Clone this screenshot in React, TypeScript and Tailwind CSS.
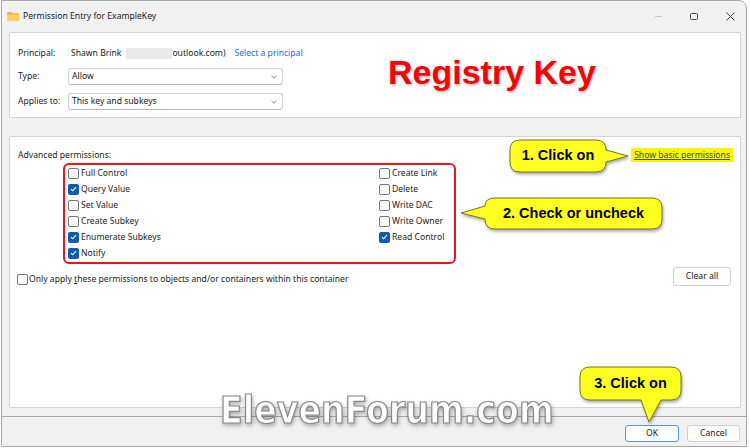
import React from "react";

type Perm = { label: string; on?: boolean };

const leftPerms: Perm[] = [
  { label: "Full Control" },
  { label: "Query Value", on: true },
  { label: "Set Value" },
  { label: "Create Subkey" },
  { label: "Enumerate Subkeys", on: true },
  { label: "Notify", on: true },
];

const rightPerms: Perm[] = [
  { label: "Create Link" },
  { label: "Delete" },
  { label: "Write DAC" },
  { label: "Write Owner" },
  { label: "Read Control", on: true },
];

function Check({ on }: { on?: boolean }) {
  if (on) {
    return (
      <span className="flex h-[11px] w-[11px] shrink-0 items-center justify-center rounded-[2px] bg-[#0f5cb8]">
        <svg width="7" height="6" viewBox="0 0 7 6">
          <path d="M1 3.1 2.7 4.8 6 1.2" fill="none" stroke="#fff" strokeWidth="1.1" />
        </svg>
      </span>
    );
  }
  return <span className="h-[11px] w-[11px] shrink-0 rounded-[2px] border border-[#777] bg-[#fbfbfb]" />;
}

function Select({ value }: { value: string }) {
  return (
    <div className="flex h-[17px] w-[215px] items-center justify-between rounded-[3px] border border-[#d2d2d2] border-b-[#b8b8b8] bg-white pl-[3px] pr-[5px]">
      <span>{value}</span>
      <svg width="6" height="4" viewBox="0 0 6 4">
        <path d="M0.5 0.8 3 3.2 5.5 0.8" fill="none" stroke="#666" strokeWidth="0.8" />
      </svg>
    </div>
  );
}

function PermRow({ p }: { p: Perm }) {
  return (
    <div className="flex h-[16px] items-center">
      <Check on={p.on} />
      <span className="ml-[2px]">{p.label}</span>
    </div>
  );
}

export default function App() {
  return (
    <div className="relative h-[448px] w-[750px] overflow-hidden bg-white font-['Noto_Sans',sans-serif] text-[8.6px] text-[#1b1b1b]">
      {/* window */}
      <div className="ml-[1px] flex h-[447px] w-[746px] flex-col rounded-tr-[8px] border border-[#a8a8a8] bg-[#f1f1f1]">
        {/* title bar */}
        <div className="flex h-[31px] shrink-0 items-center pl-[5px]">
          <svg width="12" height="9" viewBox="0 0 12 9" className="mb-[1px]">
            <path d="M0 1 Q0 0 1 0 H4.5 L5.5 1.2 H11 Q12 1.2 12 2.2 V8 Q12 9 11 9 H1 Q0 9 0 8 Z" fill="#e9b43a" />
            <rect x="0" y="2.4" width="12" height="6.6" rx="0.8" fill="#fcd15c" />
          </svg>
          <span className="ml-[4px]">Permission Entry for ExampleKey</span>
          <div className="ml-auto flex items-center">
            <span className="mr-[28px] h-px w-[7px] bg-[#c8c8c8]" />
            <span className="mr-[28px] h-[7px] w-[8px] rounded-[1.5px] border border-[#444]" />
            <svg width="9" height="9" viewBox="0 0 9 9" className="mr-[11px]">
              <path d="M0.5 0.5 8.5 8.5 M8.5 0.5 0.5 8.5" stroke="#333" strokeWidth="0.9" />
            </svg>
          </div>
        </div>

        {/* top panel */}
        <div className="ml-[7px] flex h-[86px] w-[732px] flex-col border border-[#d4d4d4] bg-white pl-[8px] pt-[10px]">
          <div className="flex h-[20px] items-center">
            <span className="w-[50px]">Principal:</span>
            <span className="pl-[3px]">Shawn Brink</span>
            <span className="ml-[5px] h-[11px] w-[46px] bg-[#e9e9e9] blur-[0.6px]" />
            <span>outlook.com)</span>
            <span className="ml-[9px] text-[#2a6cc9]">Select a principal</span>
          </div>
          <div className="mt-[5px] flex items-center">
            <span className="w-[50px]">Type:</span>
            <Select value="Allow" />
          </div>
          <div className="mt-[8px] flex items-center">
            <span className="w-[50px]">Applies to:</span>
            <Select value="This key and subkeys" />
          </div>
        </div>

        {/* permissions panel */}
        <div className="ml-[7px] mt-[18px] flex h-[272px] w-[732px] flex-col border border-[#d4d4d4] bg-white pl-[7px] pr-[7px] pt-[11px]">
          <div className="flex h-[14px] items-center justify-between">
            <span className="pl-[1px]">Advanced permissions:</span>
            <span className="flex h-[14px] items-center bg-[#f6f600] px-[3px] text-[#46502a] underline">
              Show basic permissions
            </span>
          </div>
          <div className="ml-[46px] mt-[1px] flex h-[101px] w-[393px] rounded-[6px] border-2 border-[#e8161b]">
            <div className="w-[314px] pl-[3px]">
              {leftPerms.map((p) => (
                <PermRow key={p.label} p={p} />
              ))}
            </div>
            <div>
              {rightPerms.map((p) => (
                <PermRow key={p.label} p={p} />
              ))}
            </div>
          </div>
          <div className="mt-[3px] flex items-start justify-between">
            <div className="mt-[6px] flex h-[12px] items-center">
              <Check />
              <span className="ml-[1px]">
                Only apply <span className="underline">t</span>hese permissions to objects and/or containers within this container
              </span>
            </div>
            <button className="mr-[2px] h-[19px] w-[58px] rounded-[3px] border border-[#d0d0d0] bg-[#fdfdfd]">
              Clear all
            </button>
          </div>
        </div>

        <div className="mt-[8px] h-px w-full bg-[#a9a9a9]" />

        {/* buttons */}
        <div className="mt-[8px] flex justify-end gap-[8px] pr-[6px]">
          <button className="h-[17px] w-[54px] rounded-[3px] border border-[#5b97d6] bg-[#fdfdfd]">OK</button>
          <button className="h-[17px] w-[53px] rounded-[3px] border border-[#d0d0d0] bg-[#fdfdfd]">Cancel</button>
        </div>
      </div>

      {/* annotations */}
      <div className="absolute left-[388px] top-[55px] font-['Liberation_Sans',sans-serif] text-[34px] font-bold leading-[34px] text-[#ff0000] [text-shadow:1px_2px_2px_rgba(0,0,0,0.22)]">
        Registry Key
      </div>

      <svg
        width="750"
        height="448"
        viewBox="0 0 750 448"
        className="pointer-events-none absolute left-0 top-0 drop-shadow-[1px_2px_1.5px_rgba(0,0,0,0.35)]"
      >
        <g fill="#ffff1f" stroke="#77771c" strokeWidth="1">
          <path d="M520 140 H596 Q606 140 606 150 L628 156 L606 162 Q606 172 596 172 H520 Q510 172 510 162 V150 Q510 140 520 140 Z" />
          <path d="M495 198 H652 Q662 198 662 208 V219 Q662 229 652 229 H495 Q485 229 485 219 L461 213 L485 206 Q485 198 495 198 Z" />
          <path d="M590 367 H671 Q681 367 681 377 V390 Q681 400 671 400 H661 L649 422 L641 400 H590 Q580 400 580 390 V377 Q580 367 590 367 Z" />
        </g>
      </svg>

      <div className="absolute left-[510px] top-[140px] flex h-[32px] w-[96px] items-center justify-center font-['Liberation_Sans',sans-serif] text-[14.5px] font-bold text-black">
        1. Click on
      </div>
      <div className="absolute left-[485px] top-[198px] flex h-[31px] w-[177px] items-center justify-center font-['Liberation_Sans',sans-serif] text-[14.5px] font-bold text-black">
        2. Check or uncheck
      </div>
      <div className="absolute left-[580px] top-[367px] flex h-[33px] w-[101px] items-center justify-center font-['Liberation_Sans',sans-serif] text-[14.5px] font-bold text-black">
        3. Click on
      </div>

      <div className="absolute left-[220px] top-[392px] font-['DejaVu_Sans_Condensed',sans-serif] text-[37px] font-bold leading-[37px] text-white [-webkit-text-stroke:1.2px_#8a8a8a] drop-shadow-[1px_2px_2px_rgba(0,0,0,0.3)]">
        ElevenForum.com
      </div>
    </div>
  );
}
